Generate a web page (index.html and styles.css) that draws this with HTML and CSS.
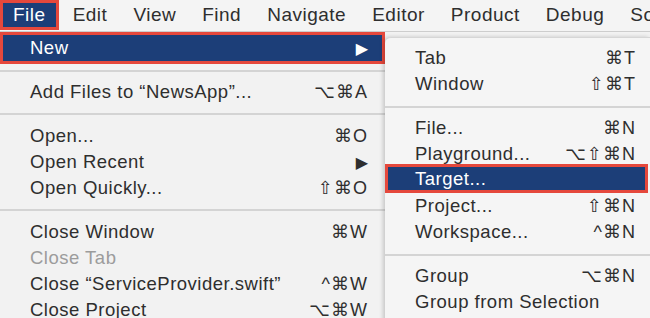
FILE: index.html
```html
<!DOCTYPE html>
<html lang="en">
<head>
    <meta charset="UTF-8">
    <title>Xcode File menu</title>
    <link rel="stylesheet" href="styles.css">
</head>
<body>
    <div class="menubar">
        <span class="title active">File</span>
        <span class="title">Edit</span>
        <span class="title">View</span>
        <span class="title">Find</span>
        <span class="title">Navigate</span>
        <span class="title">Editor</span>
        <span class="title">Product</span>
        <span class="title">Debug</span>
        <span class="title">Source Control</span>
    </div>

    <div class="menus">
        <div class="menu main">
            <div class="item selected"><span>New</span><span class="key arrow">&#9654;</span></div>
            <div class="sep first"></div>
            <div class="item"><span>Add Files to “NewsApp”...</span><span class="key">⌥⌘A</span></div>
            <div class="sep"></div>
            <div class="item"><span>Open...</span><span class="key">⌘O</span></div>
            <div class="item"><span>Open Recent</span><span class="key arrow">&#9654;</span></div>
            <div class="item"><span>Open Quickly...</span><span class="key">⇧⌘O</span></div>
            <div class="sep"></div>
            <div class="item"><span>Close Window</span><span class="key">⌘W</span></div>
            <div class="item disabled"><span>Close Tab</span></div>
            <div class="item"><span>Close “ServiceProvider.swift”</span><span class="key">^⌘W</span></div>
            <div class="item"><span>Close Project</span><span class="key">⌥⌘W</span></div>
        </div>

        <div class="menu sub">
            <div class="item"><span>Tab</span><span class="key">⌘T</span></div>
            <div class="item"><span>Window</span><span class="key">⇧⌘T</span></div>
            <div class="sep"></div>
            <div class="item"><span>File...</span><span class="key">⌘N</span></div>
            <div class="item"><span>Playground...</span><span class="key">⌥⇧⌘N</span></div>
            <div class="item selected"><span>Target...</span></div>
            <div class="item"><span>Project...</span><span class="key">⇧⌘N</span></div>
            <div class="item"><span>Workspace...</span><span class="key">^⌘N</span></div>
            <div class="sep"></div>
            <div class="item"><span>Group</span><span class="key">⌥⌘N</span></div>
            <div class="item"><span>Group from Selection</span></div>
        </div>
    </div>
</body>
</html>
```

FILE: styles.css
```css
body {
    margin: 0;
    padding: 0;
    width: 650px;
    height: 318px;
    overflow: hidden;
    background-color: #f2f2f2;
    font-family: "Liberation Sans", "DejaVu Sans", Arial, sans-serif;
    color: #2e2e2e;
}

.menubar {
    display: flex;
    align-items: flex-start;
    height: 31px;
    border-bottom: 1px solid #cdcdcd;
    background-color: #f4f4f4;
    white-space: nowrap;
    font-size: 19px;
    letter-spacing: 0.5px;
}
.title {
    padding: 0 13px;
    line-height: 30px;
}
.title.active {
    box-sizing: border-box;
    height: 30px;
    padding: 0 10px;
    line-height: 24px;
    border: 3px solid #e5483c;
    background-color: #1c3e78;
    color: #fff;
    margin-right: 1px;
}

.menus {
    display: flex;
    align-items: flex-start;
}
.menu {
    font-size: 18.5px;
    letter-spacing: 0.5px;
    white-space: nowrap;
}
.main {
    width: 385px;
    flex-shrink: 0;
}
.sub {
    width: 265px;
    flex-shrink: 0;
    margin-top: 5px;
    padding-top: 7px;
    height: 300px;
    background-color: #f5f5f5;
    border-top: 1px solid #d6d6d6;
    border-top-left-radius: 6px;
    box-shadow: -2px 0 4px rgba(0, 0, 0, 0.18);
}

.item {
    display: flex;
    justify-content: space-between;
    align-items: center;
    height: 26px;
    padding: 0 17px 0 30px;
}
.sub .item {
    padding: 0 14px 0 30px;
}
.key {
    font-size: 18px;
    letter-spacing: 1px;
}
.arrow {
    font-size: 16px;
    letter-spacing: 0;
}
.disabled {
    color: #9c9c9c;
}

.item.selected {
    height: 26px;
    padding-left: 27px;
    padding-right: 14px;
    border: 3px solid #e5483c;
    background-color: #1c3e78;
    color: #fff;
}
.sub .item.selected {
    height: 23px;
    margin-top: -3px;
    padding-left: 27px;
    margin-right: 2px;
}

.sep {
    height: 2px;
    margin: 8px 0;
    background-color: #d4d4d4;
}
.sep.first {
    margin: 6px 0 7px;
}
.sub .sep {
    margin: 9px 0 7px;
}
```
